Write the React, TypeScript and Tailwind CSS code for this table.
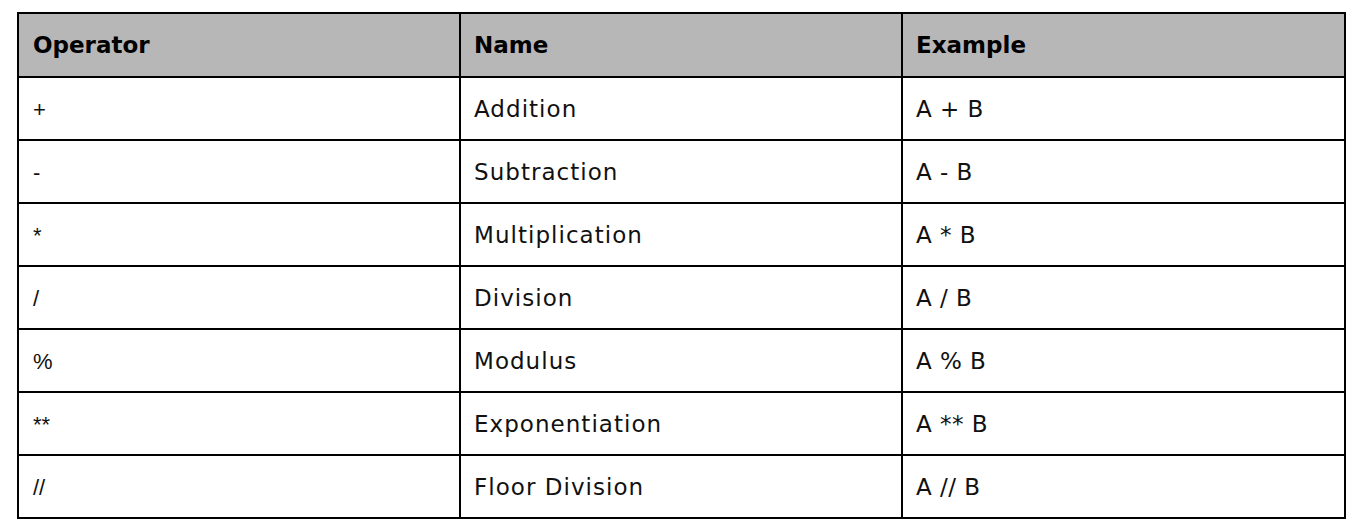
import React from "react";

const rows: [string, string, string][] = [
  ["+", "Addition", "A + B"],
  ["-", "Subtraction", "A - B"],
  ["*", "Multiplication", "A * B"],
  ["/", "Division", "A / B"],
  ["%", "Modulus", "A % B"],
  ["**", "Exponentiation", "A ** B"],
  ["//", "Floor Division", "A // B"],
];

export default function App() {
  return (
    <div className="w-[1366px] h-[529px] bg-white pt-[12px] pl-[17px] overflow-hidden">
      <table
        className="w-[1327px] border-collapse border-2 border-black table-fixed text-[#111]"
        style={{ fontFamily: "'DejaVu Sans', 'Noto Sans', sans-serif" }}
      >
        <colgroup>
          <col className="w-[442px]" />
          <col className="w-[442px]" />
          <col className="w-[443px]" />
        </colgroup>
        <thead>
          <tr className="h-[64px] bg-[#b7b7b7]">
            <th className="border-2 border-black text-left pl-[14px] font-bold text-[23px] text-black">Operator</th>
            <th className="border-2 border-black text-left pl-[13px] font-bold text-[23px] text-black">Name</th>
            <th className="border-2 border-black text-left pl-[13px] font-bold text-[23px] text-black">Example</th>
          </tr>
        </thead>
        <tbody>
          {rows.map(([op, name, ex], i) => (
            <tr key={i} className="h-[63px]">
              <td
                className="border-2 border-black pl-[14px] pt-[2px] text-[22px]"
                style={{ fontFamily: "'Liberation Sans', Arial, sans-serif" }}
              >
                {op}
              </td>
              <td className="border-2 border-black pl-[13px] pt-[2px] text-[23px] tracking-[0.045em]">{name}</td>
              <td className="border-2 border-black pl-[13px] pt-[2px] text-[23px] tracking-[0.02em]">{ex}</td>
            </tr>
          ))}
        </tbody>
      </table>
    </div>
  );
}
